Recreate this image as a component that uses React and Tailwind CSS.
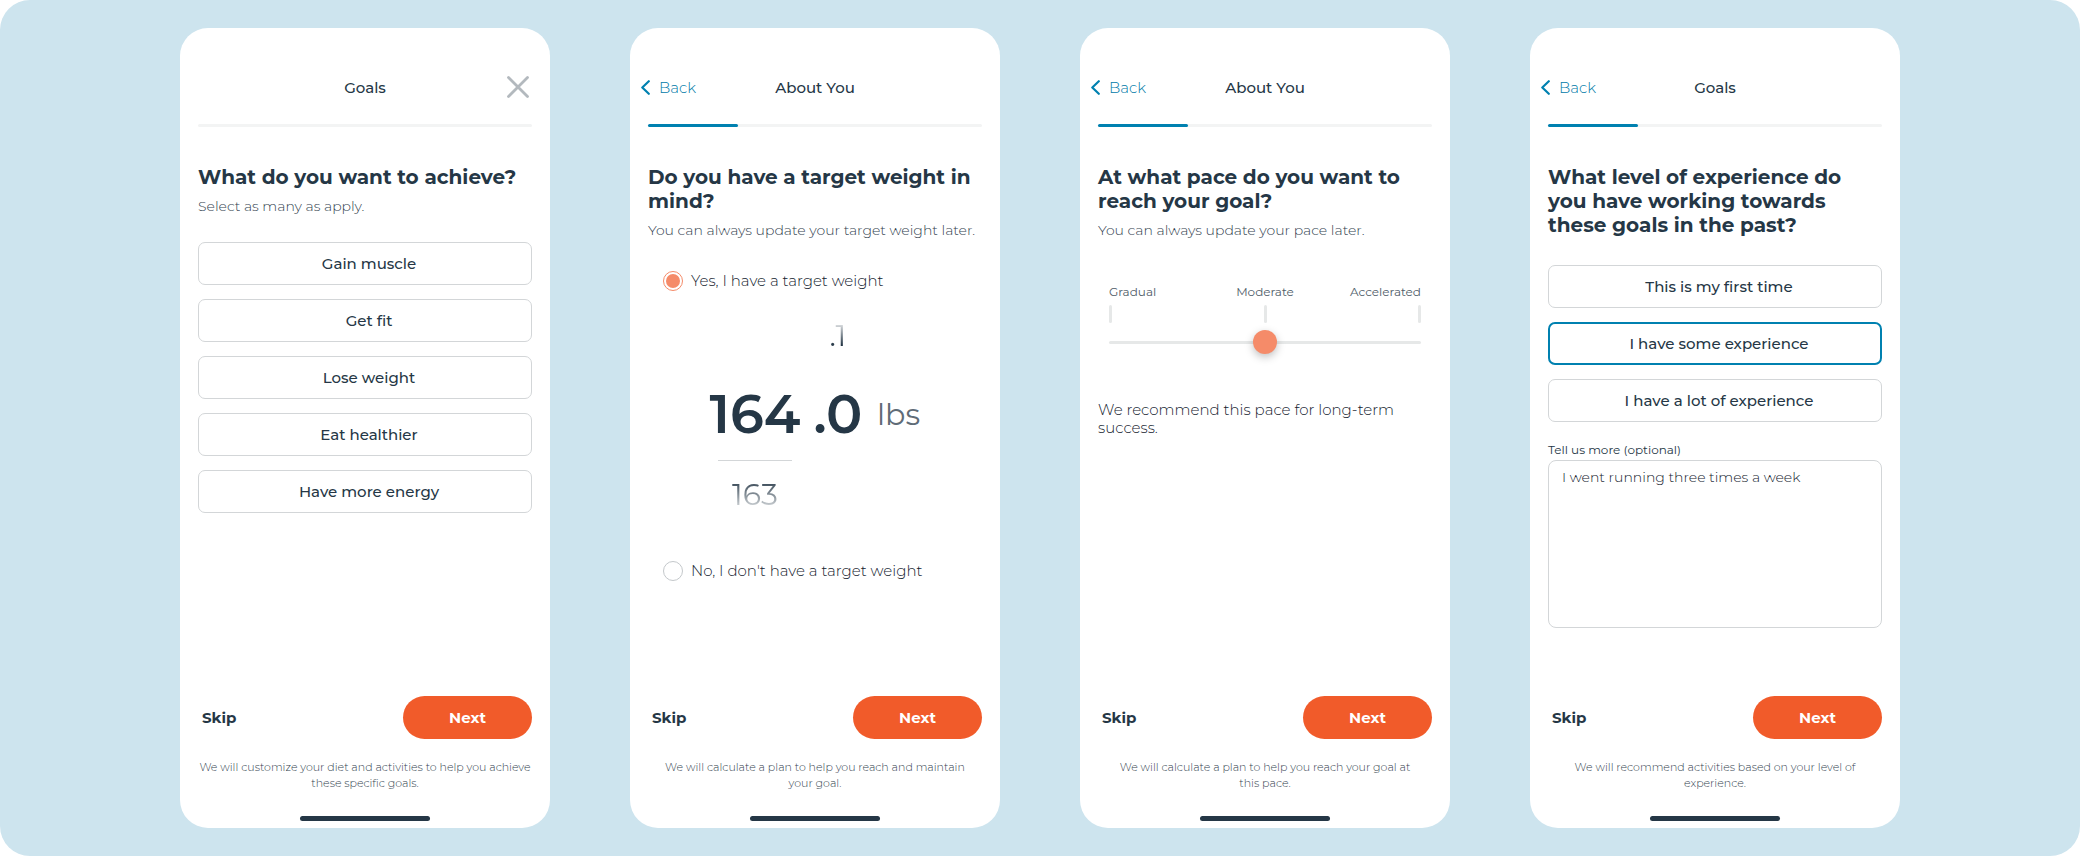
import { useState } from "react";

function Screen({ title, back, footnote, children }) {
  return (
    <section className="flex min-h-[800px] w-[370px] flex-col rounded-[28px] bg-white pb-[7px]">
      <header className="mt-[47px] grid h-6 grid-cols-[1fr_auto_1fr] items-center px-[11px]">
        <div>
          {back && (
            <button type="button" className="flex items-center gap-[9px] text-[15px] leading-[22px] font-light text-[#007aa8]">
              <svg width="9" height="15" viewBox="0 0 9 15" fill="none" stroke="#0081b0" strokeWidth="2.2" strokeLinecap="round" strokeLinejoin="round" aria-hidden="true">
                <path d="M7.8 1.2 1.3 7.5l6.5 6.3" />
              </svg>
              <span className="pt-0.5">Back</span>
            </button>
          )}
        </div>
        <h2 className="pt-0.5 text-[15px] leading-[22px] font-medium">{title}</h2>
        <div className="flex justify-end pr-2.5">
          {!back && (
            <button type="button" aria-label="Close" className="text-[#b3b9be]">
              <svg width="22" height="22" viewBox="0 0 22 22" fill="none" stroke="currentColor" strokeWidth="2.8" strokeLinecap="round" aria-hidden="true">
                <path d="M1.5 1.5l19 19M20.5 1.5l-19 19" />
              </svg>
            </button>
          )}
        </div>
      </header>
      <div className="flex flex-1 flex-col px-[18px]">
        <div className="mt-[25px] h-[3px] rounded-full bg-[#f3f4f4]">
          {back && <div className="h-full w-[90px] rounded-full bg-[#0081b0]" />}
        </div>
        <div className="mt-[38px]">{children}</div>
        <footer className="mt-auto pt-6">
          <div className="flex items-center justify-between">
            <button type="button" className="px-1 text-[15px] leading-6 font-bold">Skip</button>
            <button type="button" className="h-[43px] w-[129px] rounded-full bg-[#f15b2a] pt-0.5 text-[15px] font-bold text-white">Next</button>
          </div>
          <p className="mt-5 text-center text-[11px] leading-4 font-light text-[#33434f]">
            {footnote[0]}
            <br />
            {footnote[1]}
          </p>
          <div className="mx-auto mt-[25px] h-[5px] w-[130px] rounded-full bg-[#253746]" />
        </footer>
      </div>
    </section>
  );
}

function Heading({ lines }) {
  return (
    <h1 className="text-xl leading-6 font-bold">
      {lines.map((line) => (
        <span key={line} className="block whitespace-nowrap">{line}</span>
      ))}
    </h1>
  );
}

function Subtitle({ children }) {
  return <p className="mt-1.5 text-sm leading-[22px] font-light whitespace-nowrap text-[#33434f]">{children}</p>;
}

function Choice({ children, selected, onClick }) {
  const border = selected ? "border-2 border-[#0081b0]" : "border border-[#d3d6d8]";
  return (
    <button type="button" aria-pressed={selected} onClick={onClick} className={`h-[43px] w-full rounded-[7px] pt-0.5 pl-2 text-[15px] font-medium ${border}`}>
      {children}
    </button>
  );
}

function GoalsScreen() {
  const goals = ["Gain muscle", "Get fit", "Lose weight", "Eat healthier", "Have more energy"];
  const [picked, setPicked] = useState([]);
  const toggle = (goal) =>
    setPicked(picked.includes(goal) ? picked.filter((g) => g !== goal) : [...picked, goal]);
  return (
    <Screen title="Goals" footnote={["We will customize your diet and activities to help you achieve", "these specific goals."]}>
      <Heading lines={["What do you want to achieve?"]} />
      <Subtitle>Select as many as apply.</Subtitle>
      <div className="mt-[25px] flex flex-col gap-3.5">
        {goals.map((goal) => (
          <Choice key={goal} selected={picked.includes(goal)} onClick={() => toggle(goal)}>{goal}</Choice>
        ))}
      </div>
    </Screen>
  );
}

function TargetOption({ children, checked, onChange }) {
  return (
    <label className="ml-[15px] flex h-5 items-center gap-2 text-[15px] leading-5 font-light text-[#14222e]">
      <input
        type="radio"
        name="target-weight"
        checked={checked}
        onChange={onChange}
        className="size-5 appearance-none rounded-full border border-[#c4c8cb] bg-white bg-clip-content p-[2px] checked:border-[#f58b69] checked:bg-[#f58b69]"
      />
      {children}
    </label>
  );
}

function WeightScreen() {
  const [hasTarget, setHasTarget] = useState(true);
  return (
    <Screen title="About You" back footnote={["We will calculate a plan to help you reach and maintain", "your goal."]}>
      <Heading lines={["Do you have a target weight in", "mind?"]} />
      <Subtitle>You can always update your target weight later.</Subtitle>
      <div className="mt-[30px]">
        <TargetOption checked={hasTarget} onChange={() => setHasTarget(true)}>Yes, I have a target weight</TargetOption>
        <div className="mt-[27px] ml-[61px] grid grid-cols-[92px_46px_auto] justify-start gap-x-3.5">
          <button type="button" className="col-start-2 bg-linear-to-b from-[#253746]/20 from-20% to-[#253746] to-75% bg-clip-text text-[30px] leading-9 font-normal text-transparent">.1</button>
          <div className="col-start-1 mt-[27px] flex h-[66px] items-center justify-center text-[54px] leading-[66px] font-semibold">164</div>
          <div className="mt-[27px] flex h-[66px] items-center justify-center text-[54px] leading-[66px] font-semibold">.0</div>
          <div className="mt-[27px] flex h-[66px] items-center pt-0.5 pl-0.5 text-[30px] leading-[66px] font-normal text-[#5f6c77]">lbs</div>
          <div className="col-start-1 mx-auto mt-[13px] h-px w-[74px] bg-[#d3d6d8]" />
          <button type="button" className="col-start-1 mt-4 bg-linear-to-b from-[#253746]/90 from-15% to-[#253746]/20 to-85% bg-clip-text text-[30px] leading-9 font-normal text-transparent">163</button>
        </div>
        <div className="mt-12">
          <TargetOption checked={!hasTarget} onChange={() => setHasTarget(false)}>No, I don't have a target weight</TargetOption>
        </div>
      </div>
    </Screen>
  );
}

function PaceScreen() {
  const [pace, setPace] = useState(1);
  return (
    <Screen title="About You" back footnote={["We will calculate a plan to help you reach your goal at", "this pace."]}>
      <Heading lines={["At what pace do you want to", "reach your goal?"]} />
      <Subtitle>You can always update your pace later.</Subtitle>
      <div className="mx-[11px] mt-[43px]">
        <div className="grid grid-cols-3 text-xs leading-4 text-[#4f5d69]">
          <span>Gradual</span>
          <span className="text-center">Moderate</span>
          <span className="text-right">Accelerated</span>
        </div>
        <div className="mt-[5px] flex justify-between">
          <span className="h-[18px] w-[3px] rounded-full bg-[#e6e8e8]" />
          <span className="h-[18px] w-[3px] rounded-full bg-[#e6e8e8]" />
          <span className="h-[18px] w-[3px] rounded-full bg-[#e6e8e8]" />
        </div>
        <input
          type="range"
          aria-label="Pace"
          min="0"
          max="2"
          value={pace}
          onChange={(e) => setPace(Number(e.target.value))}
          className="mt-[7px] block h-6 w-full appearance-none bg-transparent [&::-webkit-slider-runnable-track]:h-[3px] [&::-webkit-slider-runnable-track]:rounded-full [&::-webkit-slider-runnable-track]:bg-[#e6e8e8] [&::-webkit-slider-thumb]:-mt-[11px] [&::-webkit-slider-thumb]:size-6 [&::-webkit-slider-thumb]:appearance-none [&::-webkit-slider-thumb]:rounded-full [&::-webkit-slider-thumb]:bg-[#f58b69] [&::-webkit-slider-thumb]:shadow-[0_3px_8px_rgba(0,0,0,0.25)]"
        />
      </div>
      <p className="mt-[47px] text-[15px] leading-[18px] font-light text-[#14222e]">
        We recommend this pace for long-term
        <br />
        success.
      </p>
    </Screen>
  );
}

function ExperienceScreen() {
  const levels = ["This is my first time", "I have some experience", "I have a lot of experience"];
  const [level, setLevel] = useState(levels[1]);
  return (
    <Screen title="Goals" back footnote={["We will recommend activities based on your level of", "experience."]}>
      <Heading lines={["What level of experience do", "you have working towards", "these goals in the past?"]} />
      <div className="mt-7 flex flex-col gap-3.5">
        {levels.map((item) => (
          <Choice key={item} selected={item === level} onClick={() => setLevel(item)}>{item}</Choice>
        ))}
      </div>
      <label htmlFor="experience-notes" className="mt-5 block text-xs leading-4 font-normal">Tell us more (optional)</label>
      <textarea
        id="experience-notes"
        defaultValue="I went running three times a week"
        className="mt-0.5 block h-[168px] w-full resize-none rounded-lg border border-[#d3d6d8] px-[13px] py-[5px] text-sm leading-[22px] font-light text-[#14222e]"
      />
    </Screen>
  );
}

export default function App() {
  return (
    <main className="flex min-h-screen flex-wrap justify-center gap-20 rounded-[30px] bg-[#cde4ee] py-7 font-['Montserrat','Inter',sans-serif] text-[#253746]">
      <GoalsScreen />
      <WeightScreen />
      <PaceScreen />
      <ExperienceScreen />
    </main>
  );
}
